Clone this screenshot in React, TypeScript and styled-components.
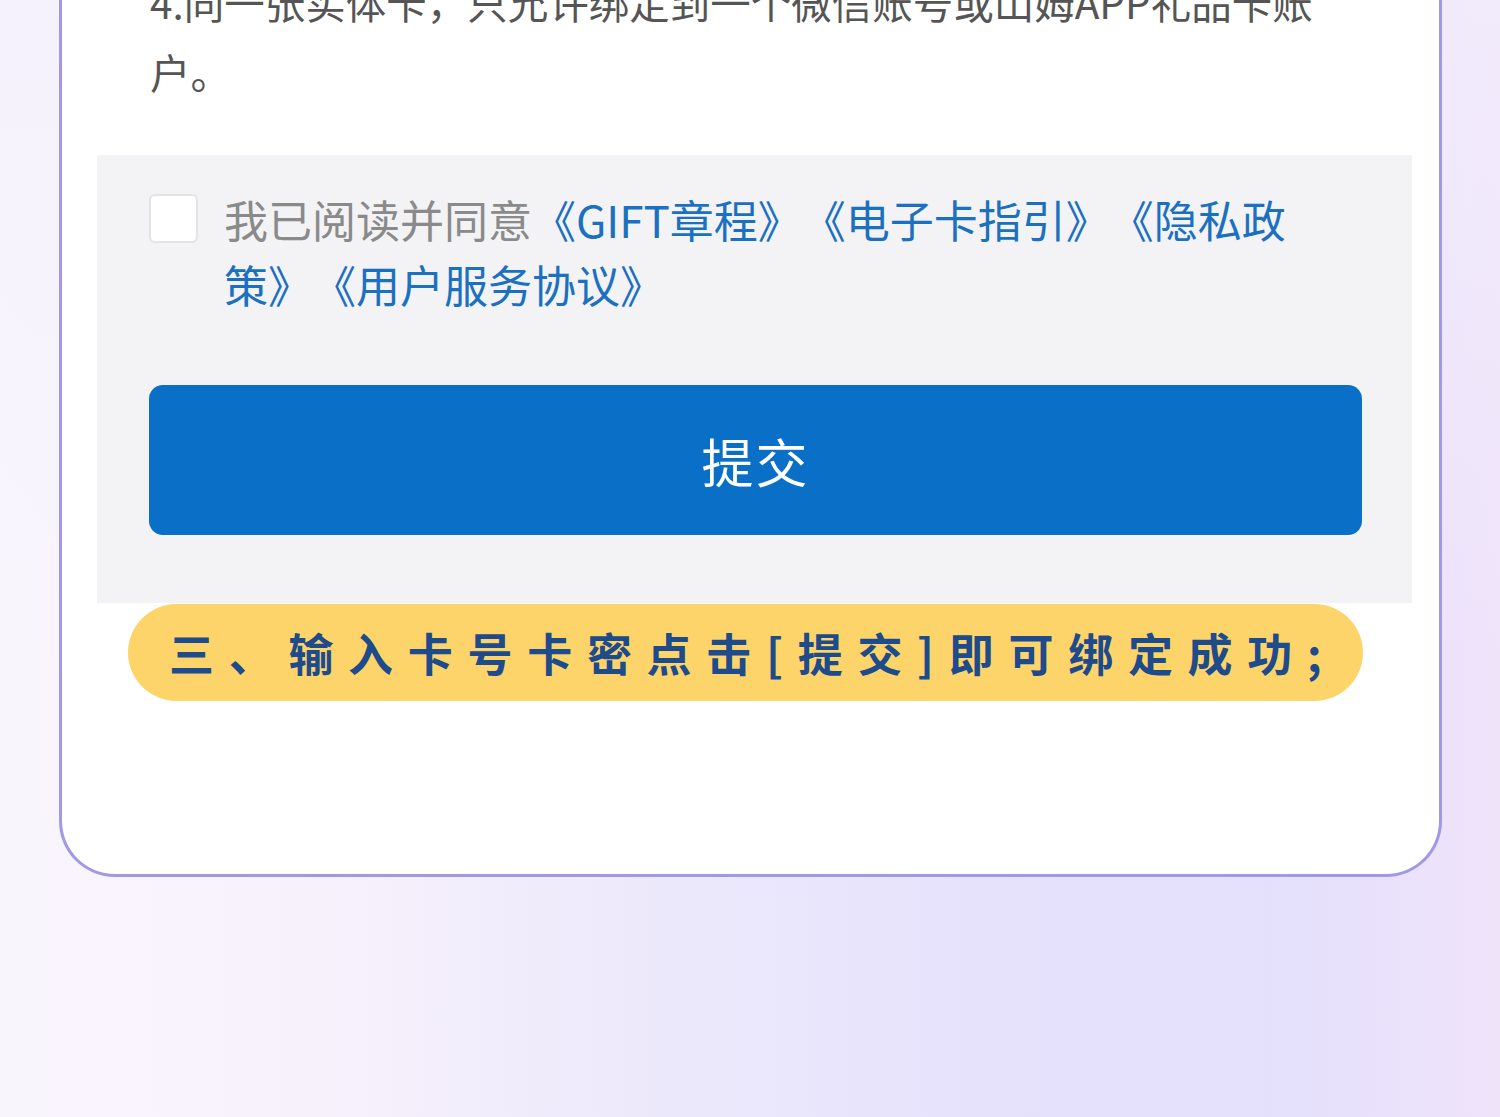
import React from "react";
import styled, { createGlobalStyle } from "styled-components";

const GlobalStyle = createGlobalStyle`
  html, body {
    margin: 0;
    padding: 0;
  }
  body {
    font-family: "Noto Sans CJK SC", "Noto Sans", sans-serif;
    overflow: hidden;
  }
`;

const Page = styled.div`
  width: 1500px;
  height: 1117px;
  box-sizing: border-box;
  padding: 0 58px 0 59px;
  overflow: hidden;
  background:
    linear-gradient(180deg, rgba(244, 240, 252, 0.6) 0%, rgba(244, 240, 252, 0) 60%),
    linear-gradient(90deg, #f9f5fd 0%, #f7f1fc 22%, #ede9fb 42%, #e6e2fc 65%, #e4e0fc 85%, #efe3fa 100%);
`;

const Card = styled.div`
  margin-top: -33px;
  background: #ffffff;
  border: 3px solid #a298e8;
  border-top: none;
  border-radius: 0 0 56px 56px;
  padding: 0 0 173px;
  display: flex;
  flex-direction: column;
`;

const Notice = styled.p`
  margin: 0;
  padding: 0 77px 0 88px;
  font-size: 40.5px;
  line-height: 70px;
  color: #555555;
  text-spacing-trim: space-all;
`;

const AgreePanel = styled.div`
  margin: 48px 27px 0 35px;
  background: #f3f3f5;
  padding: 32px 50px 68px 52px;
  display: flex;
  flex-direction: column;
  gap: 68px;
`;

const AgreeRow = styled.div`
  display: flex;
  align-items: flex-start;
  gap: 26px;
`;

const CheckBox = styled.span`
  flex: none;
  width: 49px;
  height: 49px;
  margin-top: 7px;
  box-sizing: border-box;
  background: #ffffff;
  border: 2px solid #e3e3e6;
  border-radius: 6px;
`;

const AgreeText = styled.p`
  margin: 0;
  font-size: 44px;
  line-height: 65px;
  color: #8a8a8a;
  text-spacing-trim: space-all;
`;

const DocLink = styled.span`
  color: #1b70bf;
`;

const SubmitButton = styled.button`
  height: 150px;
  width: 100%;
  border: none;
  border-radius: 14px;
  background: #0a6fc6;
  color: #ffffff;
  font-family: "Noto Sans CJK SC", "Noto Sans", sans-serif;
  font-size: 52px;
  letter-spacing: 2px;
  cursor: pointer;
`;

const StepPill = styled.div`
  margin: 1px 76px 0 66px;
  height: 97px;
  border-radius: 49px;
  background: #fdd46a;
  display: flex;
  align-items: center;
  padding-left: 41px;
  font-size: 45px;
  font-weight: 700;
  color: #1d4b8b;
  letter-spacing: 14.7px;
  white-space: nowrap;
`;

export default function App() {
  return (
    <>
      <GlobalStyle />
      <Page>
        <Card>
          <Notice>4.同一张实体卡，只允许绑定到一个微信账号或山姆APP礼品卡账户。</Notice>
          <AgreePanel>
            <AgreeRow>
              <CheckBox />
              <AgreeText>
                我已阅读并同意
                <DocLink>《GIFT章程》</DocLink>
                <DocLink>《电子卡指引》</DocLink>
                <DocLink>《隐私政策》</DocLink>
                <DocLink>《用户服务协议》</DocLink>
              </AgreeText>
            </AgreeRow>
            <SubmitButton>提交</SubmitButton>
          </AgreePanel>
          <StepPill>三、输入卡号卡密点击[提交]即可绑定成功;</StepPill>
        </Card>
      </Page>
    </>
  );
}
